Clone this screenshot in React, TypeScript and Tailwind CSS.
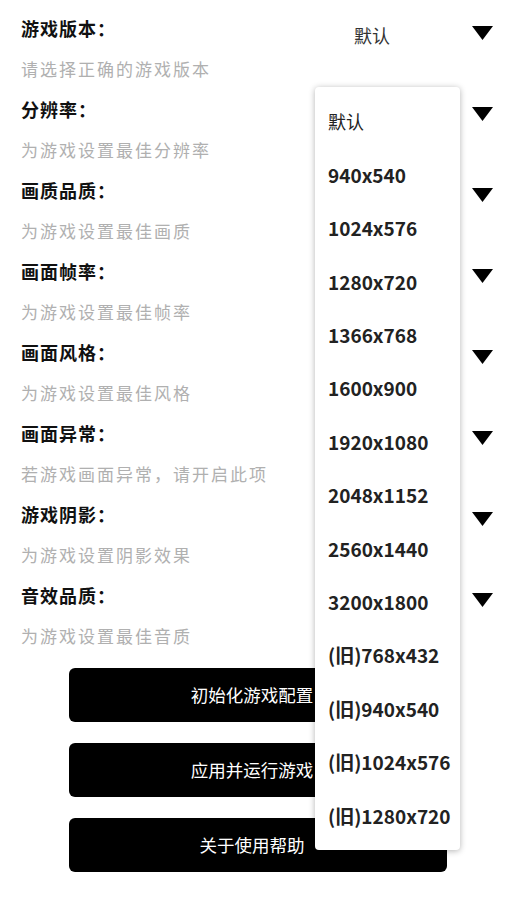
import React from "react";

const settings = [
  { label: "游戏版本：", hint: "请选择正确的游戏版本", value: "默认" },
  { label: "分辨率：", hint: "为游戏设置最佳分辨率", value: "" },
  { label: "画质品质：", hint: "为游戏设置最佳画质", value: "" },
  { label: "画面帧率：", hint: "为游戏设置最佳帧率", value: "" },
  { label: "画面风格：", hint: "为游戏设置最佳风格", value: "" },
  { label: "画面异常：", hint: "若游戏画面异常，请开启此项", value: "" },
  { label: "游戏阴影：", hint: "为游戏设置阴影效果", value: "" },
  { label: "音效品质：", hint: "为游戏设置最佳音质", value: "" },
];

const resolutions = [
  "940x540",
  "1024x576",
  "1280x720",
  "1366x768",
  "1600x900",
  "1920x1080",
  "2048x1152",
  "2560x1440",
  "3200x1800",
  "(旧)768x432",
  "(旧)940x540",
  "(旧)1024x576",
  "(旧)1280x720",
];

const buttons = ["初始化游戏配置", "应用并运行游戏", "关于使用帮助"];

function Caret() {
  return (
    <svg width="21" height="14" viewBox="0 0 21 14" className="shrink-0">
      <path d="M0 0 H21 L10.5 14 Z" fill="#000" />
    </svg>
  );
}

export default function App() {
  return (
    <div
      className="relative w-[514px] h-[914px] bg-white overflow-hidden"
      style={{ fontFamily: '"Noto Sans CJK SC", "Noto Sans", sans-serif' }}
    >
      <div className="flex flex-col gap-4 pt-4 pl-[21px] pr-[21px]">
        {settings.map((s) => (
          <div key={s.label} className="flex flex-col">
            <div className="flex items-start justify-between h-[24px]">
              <span className="text-[18px] leading-[24px] font-bold text-[#111] tracking-[1px]">{s.label}</span>
              <div className="flex items-center h-[30px] mt-[2px]">
                <span className="w-[120px] text-center text-[18px] leading-[24px] mt-[4px] text-[#333]">
                  {s.value}
                </span>
                <span className="ml-[40px]">
                  <Caret />
                </span>
              </div>
            </div>
            <span className="mt-[17px] text-[17px] leading-[24px] tracking-[2px] text-[#b0b0b0]">
              {s.hint}
            </span>
          </div>
        ))}
      </div>

      <div className="flex flex-col gap-[21px] mt-5 ml-[69px] w-[378px]">
        {buttons.map((b) => (
          <button
            key={b}
            className="h-[54px] rounded-md bg-black text-white text-[17.5px] pr-[12px]"
          >
            {b}
          </button>
        ))}
      </div>

      <div className="absolute left-[315px] top-[87px] w-[145px] py-2 bg-white rounded shadow-[0_1px_6px_rgba(0,0,0,0.3)]">
        <div className="h-[53.4px] flex items-center pl-[13px] text-[18px] text-[#222]">默认</div>
        {resolutions.map((r) => (
          <div
            key={r}
            className="h-[53.4px] flex items-center pl-[13px] text-[19px] font-semibold text-[#222] whitespace-nowrap"
          >
            {r}
          </div>
        ))}
      </div>
    </div>
  );
}
